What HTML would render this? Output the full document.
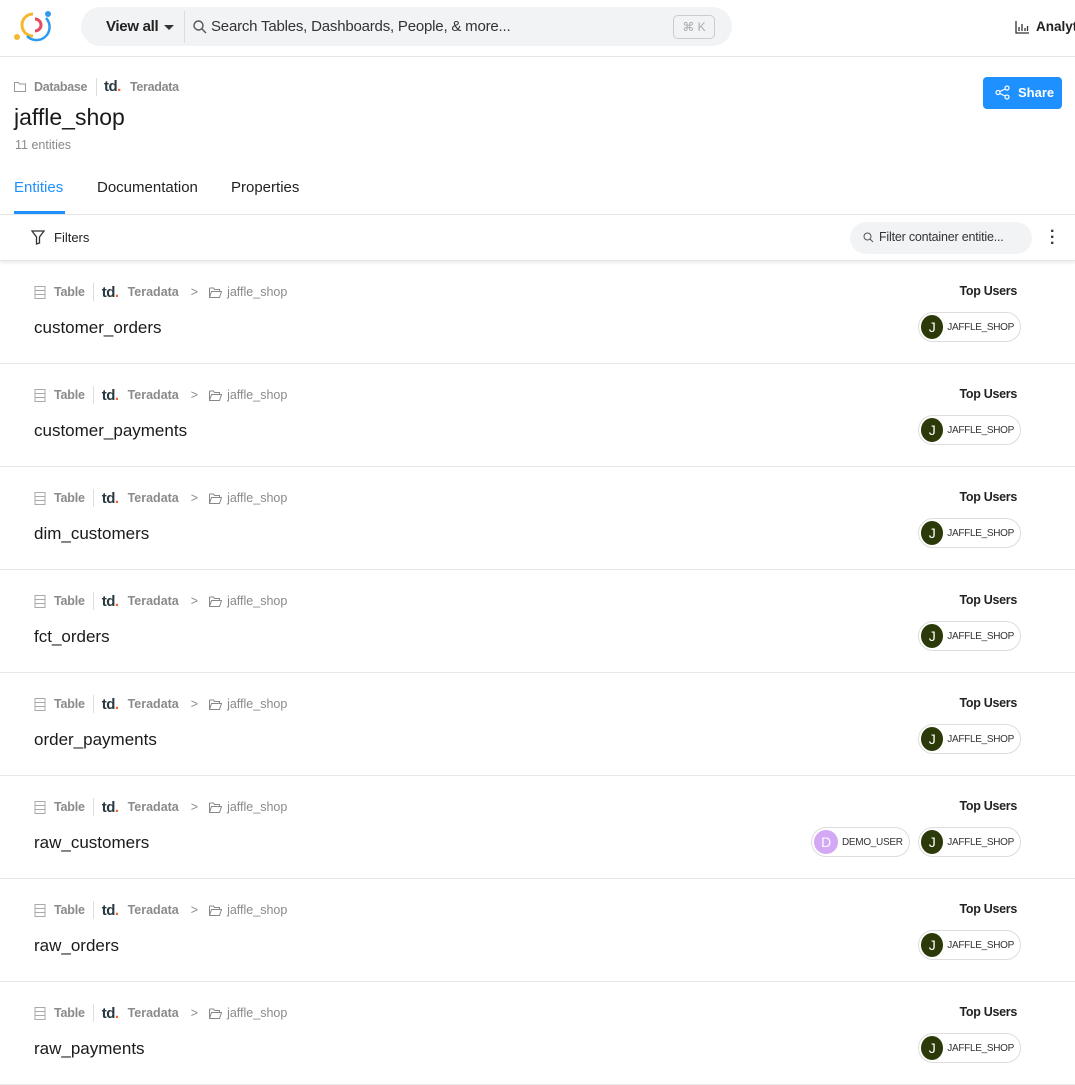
<!DOCTYPE html>
<html><head><meta charset="utf-8"><style>
*{box-sizing:border-box;margin:0;padding:0}
body{width:1075px;height:1067px;overflow:hidden;background:#fff;font-family:"Liberation Sans",sans-serif;color:#222;position:relative}
.abs{position:absolute}
.top{height:57px;border-bottom:1px solid #e5e5e5;position:relative}
.search{left:81px;top:7px;width:651px;height:39px;background:#f2f3f5;border-radius:20px}
.gray{color:#8a8a8a}
.td{font-weight:bold;color:#2b3a42;letter-spacing:-0.5px}
.td i{color:#f0642d;font-style:normal}
.row{position:absolute;left:0;width:1075px;height:103px;border-bottom:1px solid #e8e8e8}
.meta{position:absolute;left:34px;top:23px;font-size:12.5px;color:#8a8a8a;display:flex;align-items:center;height:16px;white-space:nowrap}
.title{position:absolute;left:34px;top:57px;font-size:17px;color:#1a1a1a}
.tu{position:absolute;right:58px;top:23px;font-size:12.5px;font-weight:bold;color:#222;letter-spacing:-0.3px}
.chip{position:absolute;top:51px;height:30px;border:1px solid #ddd;border-radius:15px;display:flex;align-items:center;padding:0 6px 0 2px;font-size:10px;color:#333;letter-spacing:-0.3px}
.av{width:24px;height:24px;border-radius:50%;color:#fff;font-size:14px;display:flex;align-items:center;justify-content:center;margin-right:4px}
</style></head><body>
<div class="top">
<svg class="abs" style="left:13px;top:8px" width="40" height="34" viewBox="0 0 40 34"><path d="M20 6 A11 11 0 1 0 20 28" stroke="#f5b82e" stroke-width="3" fill="none"/><path d="M22 11 A6 6 0 0 1 22 23" stroke="#ea4b5c" stroke-width="3" fill="none"/><path d="M14 28 A12 12 0 0 0 33 10" stroke="#2d9cf0" stroke-width="2.5" fill="none"/><circle cx="35" cy="6" r="3" fill="#2d9cf0"/><circle cx="4" cy="29" r="3" fill="#f5b82e"/></svg>
<div class="abs search"></div>
<div class="abs" style="left:106px;top:18px;font-size:15px;font-weight:bold;color:#222;letter-spacing:-0.3px">View all</div>
<div class="abs" style="left:164px;top:25px;border:5px solid transparent;border-top-color:#333;border-bottom:0"></div>
<div class="abs" style="left:184px;top:11px;width:1px;height:32px;background:#ddd"></div>
<svg class="abs" style="left:193px;top:20px" width="14" height="14" viewBox="0 0 14 14"><circle cx="5.5" cy="5.5" r="4.5" stroke="#555" stroke-width="1.4" fill="none"/><path d="M9 9 L13 13" stroke="#555" stroke-width="1.4"/></svg>
<div class="abs" style="left:211px;top:18px;font-size:15px;color:#333;letter-spacing:-0.2px">Search Tables, Dashboards, People, &amp; more...</div>
<div class="abs" style="left:673px;top:15px;width:42px;height:24px;border:1px solid #ccc;border-radius:5px;font-size:12px;color:#aaa;text-align:center;line-height:22px">⌘ K</div>
<svg class="abs" style="left:1015px;top:20px" width="15" height="14" viewBox="0 0 15 14"><path d="M1 1V13H14M4 11V7M7 11V4M10 11V8M12.5 11V6" stroke="#333" stroke-width="1.3" fill="none"/></svg>
<div class="abs" style="left:1036px;top:19px;font-size:13.5px;color:#222;font-weight:bold">Analytics</div>
</div>
<svg class="abs" style="left:14px;top:81px" width="12" height="11" viewBox="0 0 12 11"><path d="M.5 1.5h4l1 1.5h6v7.5h-11z" stroke="#999" fill="none"/></svg>
<div class="abs gray" style="left:34px;top:80px;font-size:12.5px;font-weight:bold;letter-spacing:-0.3px">Database</div>
<div class="abs" style="left:96px;top:78px;width:1px;height:18px;background:#ddd"></div>
<div class="abs td" style="left:104px;top:78px;font-size:15px">td<i>.</i></div>
<div class="abs gray" style="left:130px;top:80px;font-size:12.5px;font-weight:bold;letter-spacing:-0.3px">Teradata</div>
<div class="abs" style="left:14px;top:104px;font-size:23px;color:#1a1a1a">jaffle_shop</div>
<div class="abs gray" style="left:15px;top:138px;font-size:12.5px">11 entities</div>
<div class="abs" style="left:983px;top:77px;width:79px;height:32px;background:#1e90ff;border-radius:4px;color:#fff;font-size:13px;font-weight:bold;line-height:32px;padding-left:35px">Share</div>
<svg class="abs" style="left:995px;top:85px" width="15" height="15" viewBox="0 0 15 15"><circle cx="12" cy="3" r="2" stroke="#fff" fill="none" stroke-width="1.2"/><circle cx="3" cy="7.5" r="2" stroke="#fff" fill="none" stroke-width="1.2"/><circle cx="12" cy="12" r="2" stroke="#fff" fill="none" stroke-width="1.2"/><path d="M4.8 6.5L10.2 4M4.8 8.5L10.2 11" stroke="#fff" stroke-width="1.2"/></svg>
<div class="abs" style="left:14px;top:179px;font-size:15px;color:#1e90ff">Entities</div>
<div class="abs" style="left:97px;top:179px;font-size:15px;color:#222">Documentation</div>
<div class="abs" style="left:231px;top:179px;font-size:15px;color:#222">Properties</div>
<div class="abs" style="left:14px;top:211px;width:51px;height:3px;background:#1e90ff"></div>
<div class="abs" style="left:0;top:214px;width:1075px;height:1px;background:#e5e5e5"></div>
<div class="abs" style="left:0;top:215px;width:1075px;height:46px;box-shadow:0 2px 3px rgba(0,0,0,.08);border-bottom:1px solid #e5e5e5"></div>
<svg class="abs" style="left:31px;top:230px" width="14" height="15" viewBox="0 0 14 15"><path d="M1 1H13L8.5 7V13L5.5 14V7Z" stroke="#333" stroke-width="1.3" fill="none"/></svg>
<div class="abs" style="left:54px;top:230px;font-size:13px;color:#222">Filters</div>
<div class="abs" style="left:850px;top:222px;width:182px;height:32px;background:#f2f3f5;border-radius:16px"></div>
<svg class="abs" style="left:863px;top:232px" width="11" height="11" viewBox="0 0 11 11"><circle cx="4.5" cy="4.5" r="3.5" stroke="#555" fill="none"/><path d="M7 7L10 10" stroke="#555"/></svg>
<div class="abs" style="left:879px;top:230px;font-size:12.5px;color:#333;letter-spacing:-0.2px">Filter container entitie...</div>
<div class="abs" style="left:1050px;top:229px;font-size:16px;line-height:6px;color:#333;font-weight:bold">·<br>·<br>·</div>
<div id="rows"></div>
<script>
var names=["customer_orders","customer_payments","dim_customers","fct_orders","order_payments","raw_customers","raw_orders","raw_payments"];
var h="";
names.forEach(function(n,i){
var top=261+i*103;
var demo=n=="raw_customers"?'<div class="chip" style="left:811px;width:99px"><div class="av" style="background:#d3a8f5">D</div>DEMO_USER</div>':'';
h+='<div class="row" style="top:'+top+'px"><div class="meta"><svg width="12" height="13" viewBox="0 0 12 13" style="margin-right:8px"><rect x="1" y=".5" width="10" height="12" stroke="#aaa" fill="none"/><path d="M1 4.5H11M1 8.5H11" stroke="#aaa"/></svg><b style="letter-spacing:-0.2px">Table</b><span style="width:1px;height:18px;background:#ddd;margin:0 8px"></span><span class="td" style="font-size:15px;margin-right:9px">td<i>.</i></span><b>Teradata</b><span style="margin:0 11px 0 12px">&gt;</span><svg width="13" height="11" viewBox="0 0 13 11" style="margin-right:5px"><path d="M.5 1h4l1 1.5h5v2M.5 1v9.5h10l2-6h-10l-2 6" stroke="#888" fill="none"/></svg><span>jaffle_shop</span></div><div class="title">'+n+'</div><div class="tu">Top Users</div>'+demo+'<div class="chip" style="left:918px;width:103px"><div class="av" style="background:#2b3a08">J</div>JAFFLE_SHOP</div></div>';
});
document.getElementById("rows").innerHTML=h;
</script>
</body></html>
